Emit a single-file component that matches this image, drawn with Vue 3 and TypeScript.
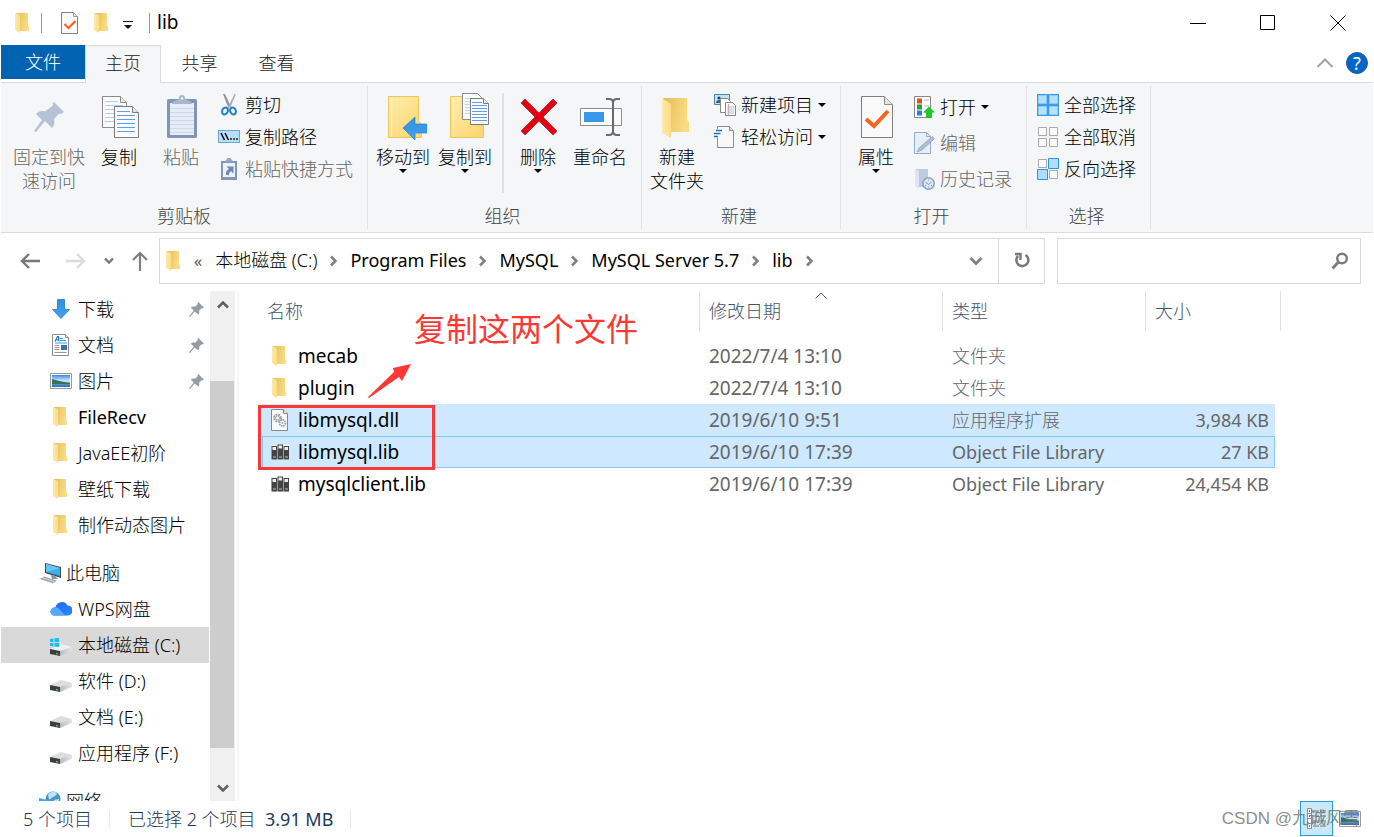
<script setup lang="ts">
import { ref } from 'vue'

interface SmallCommand {
  label: string
  icon: string
  disabled?: boolean
  menu?: boolean
}

interface NavItem {
  label: string
  icon: string
  pinned?: boolean
  root?: boolean
  current?: boolean
}

interface FileEntry {
  name: string
  icon: string
  date: string
  type: string
  size: string
  selected?: boolean
  focused?: boolean
}

const search = ref('')

// Latin strings are set in the regular weight, Chinese strings in the light one.
const isLatin = (text: string): boolean => /^[\x20-\x7e]+$/.test(text)

const tabs: string[] = ['共享', '查看']

const clipboardCommands: SmallCommand[] = [
  { label: '剪切', icon: 'i-cut' },
  { label: '复制路径', icon: 'i-path' },
  { label: '粘贴快捷方式', icon: 'i-shortcut', disabled: true },
]

const newCommands: SmallCommand[] = [
  { label: '新建项目', icon: 'i-newitem', menu: true },
  { label: '轻松访问', icon: 'i-easy', menu: true },
]

const openCommands: SmallCommand[] = [
  { label: '打开', icon: 'i-open', menu: true },
  { label: '编辑', icon: 'i-edit', disabled: true },
  { label: '历史记录', icon: 'i-history', disabled: true },
]

const selectCommands: SmallCommand[] = [
  { label: '全部选择', icon: 'i-selall' },
  { label: '全部取消', icon: 'i-selnone' },
  { label: '反向选择', icon: 'i-selinv' },
]

const crumbs: string[] = ['本地磁盘 (C:)', 'Program Files', 'MySQL', 'MySQL Server 5.7', 'lib']

const navItems: NavItem[] = [
  { label: '下载', icon: 'i-download', pinned: true },
  { label: '文档', icon: 'i-doc', pinned: true },
  { label: '图片', icon: 'i-picture', pinned: true },
  { label: 'FileRecv', icon: 'i-folder' },
  { label: 'JavaEE初阶', icon: 'i-folder' },
  { label: '壁纸下载', icon: 'i-folder' },
  { label: '制作动态图片', icon: 'i-folder' },
  { label: '此电脑', icon: 'i-pc', root: true },
  { label: 'WPS网盘', icon: 'i-cloud' },
  { label: '本地磁盘 (C:)', icon: 'i-windrive', current: true },
  { label: '软件 (D:)', icon: 'i-drive' },
  { label: '文档 (E:)', icon: 'i-drive' },
  { label: '应用程序 (F:)', icon: 'i-drive' },
  { label: '网络', icon: 'i-network', root: true },
]

const files: FileEntry[] = [
  { name: 'mecab', icon: 'i-folder', date: '2022/7/4 13:10', type: '文件夹', size: '' },
  { name: 'plugin', icon: 'i-folder', date: '2022/7/4 13:10', type: '文件夹', size: '' },
  { name: 'libmysql.dll', icon: 'i-dll', date: '2019/6/10 9:51', type: '应用程序扩展', size: '3,984 KB', selected: true },
  { name: 'libmysql.lib', icon: 'i-lib', date: '2019/6/10 17:39', type: 'Object File Library', size: '27 KB', selected: true, focused: true },
  { name: 'mysqlclient.lib', icon: 'i-lib', date: '2019/6/10 17:39', type: 'Object File Library', size: '24,454 KB' },
]
</script>

<template>
  <svg class="sprite" aria-hidden="true">
    <defs>
      <linearGradient id="g-back" x1="0" y1="0" x2="1" y2="0.3">
        <stop offset="0" stop-color="#e3bb58" /><stop offset="1" stop-color="#fbdc83" />
      </linearGradient>
      <linearGradient id="g-flap" x1="0" y1="0" x2="1" y2="0">
        <stop offset="0" stop-color="#ffe9a8" /><stop offset="1" stop-color="#fbdd85" />
      </linearGradient>
      <linearGradient id="g-fold" x1="0" y1="0" x2="1" y2="1">
        <stop offset="0" stop-color="#ffedae" /><stop offset="1" stop-color="#fcd46c" />
      </linearGradient>
      <linearGradient id="g-blue" x1="0" y1="0" x2="0" y2="1">
        <stop offset="0" stop-color="#2f8fe0" /><stop offset="1" stop-color="#41a4f0" />
      </linearGradient>
      <linearGradient id="g-drive" x1="0" y1="0" x2="1" y2="0">
        <stop offset="0" stop-color="#b9bbbd" /><stop offset="1" stop-color="#e4e5e7" />
      </linearGradient>
      <linearGradient id="g-cloud" x1="0" y1="0" x2="1" y2="1">
        <stop offset="0" stop-color="#1d63ee" /><stop offset="1" stop-color="#2e8bfb" />
      </linearGradient>
      <linearGradient id="g-sky" x1="0" y1="0" x2="0" y2="1">
        <stop offset="0" stop-color="#3f86e6" /><stop offset="0.5" stop-color="#d5ecfb" /><stop offset="0.7" stop-color="#5d9fc0" /><stop offset="1" stop-color="#2d6cb4" />
      </linearGradient>
    </defs>

    <symbol id="i-folder" viewBox="0 0 22 22">
      <path d="M4 1h12v13l1 1v4H6z" fill="url(#g-back)" />
      <path d="M3 1l5 2v18l-5-3z" fill="url(#g-flap)" />
    </symbol>
    <symbol id="i-check" viewBox="0 0 22 22">
      <path d="M3.500.5h12l4 4v17h-16z" fill="#fafafa" stroke="#808080" />
      <path d="M15.500.5v4h4" fill="#e4e4e4" stroke="#999" />
      <path d="M6.500 12l4 4 7-7" fill="none" stroke="#f4641e" stroke-width="2.200" />
    </symbol>
    <symbol id="i-cut" viewBox="0 0 22 22">
      <path d="M5 0l2 0 5.500 12-2 2z" fill="#8b9299" /><path d="M16.500 0h1.500l-5.500 13-3 1z" fill="#a9afb5" />
      <ellipse cx="7" cy="17" rx="2.800" ry="3.600" transform="rotate(25 7 17)" fill="none" stroke="#1d82c6" stroke-width="2" />
      <ellipse cx="15" cy="17" rx="2.800" ry="3.600" transform="rotate(-25 15 17)" fill="none" stroke="#1d82c6" stroke-width="2" />
    </symbol>
    <symbol id="i-path" viewBox="0 0 22 22">
      <rect x="0.500" y="4.500" width="21" height="12" fill="#b7defa" stroke="#6ba6cc" />
      <path d="M3 7l3.500 7M7 7l3.500 7" stroke="#111" stroke-width="1.600" />
      <path d="M12 13h2M15 13h2M18 13h2" stroke="#222" stroke-width="1.600" />
    </symbol>
    <symbol id="i-shortcut" viewBox="0 0 22 22">
      <path d="M3 3h16v19H3z" fill="#8396b8" /><path d="M5 5h12v14H5z" fill="#eef3fa" />
      <path d="M7 4c0-2 2-2 2.500-4h3c.5 2 2.500 2 2.500 4z" fill="#93a5c2" />
      <path d="M8.500 8.500h7v7l-2.300-2.300c-2 1-2.400 2.300-2.400 4.300l-3-1c0-3 1.300-4.300 3.200-5.500z" fill="#6f87b5" />
    </symbol>
    <symbol id="i-newitem" viewBox="0 0 22 22">
      <path d="M.5.5h15v10H.5z" fill="#bfe2f7" stroke="#4988ad" /><circle cx="5" cy="4" r="1.600" fill="#23445c" /><path d="M2 9c0-4 6-4 6 0z" fill="#35617e" />
      <path d="M6.500 4.500h7l3 3v11h-10z" fill="#fff" stroke="#888" />
      <path d="M11.500 8.500h7l3 3v10h-10z" fill="#fff" stroke="#888" /><path d="M13 13h7M13 15h7M13 17h7M13 19h7" stroke="#a5c5e8" /><path d="M14.500 10v11" stroke="#e4a3a8" />
    </symbol>
    <symbol id="i-easy" viewBox="0 0 22 22">
      <path d="M3.500.5h12l4 4v17h-16z" fill="#f8f8f8" stroke="#8b8b8b" /><path d="M15.500.5v4h4" fill="#e3e3e3" stroke="#8b8b8b" />
      <path d="M2 4.500h5M0 7.500h6M0 10.500h5" stroke="#f5f6f7" stroke-width="3" />
      <path d="M2 4.500h6M0 7.500h6.500M0 10.500h4" stroke="#1c6fb7" stroke-width="1.500" />
    </symbol>
    <symbol id="i-open" viewBox="0 0 22 22">
      <path d="M1.500.5h16v21h-16z" fill="#fcfcfc" stroke="#888" />
      <path d="M4 2.500h5v5H4z" fill="#e8501a" /><path d="M4 8.500h5v5H4z" fill="#22a52b" /><path d="M4 14.500h5v5H4z" fill="#2384dc" />
      <path d="M11 4h5M11 10h5M11 16h3" stroke="#b7b7b7" />
      <path d="M16 10.500l6 6h-3v6h-6v-6h-3z" fill="#1fc62d" />
    </symbol>
    <symbol id="i-edit" viewBox="0 0 22 22">
      <path d="M1.500.5h12l4 4v17h-16z" fill="#e6eef9" stroke="#93a8ca" /><path d="M13.500.5v4h4" fill="none" stroke="#93a8ca" />
      <path d="M19.500 4.500l2 2L9 18l-5 2 2-4z" fill="#abbdd8" stroke="#8fa3c2" stroke-width=".8" />
    </symbol>
    <symbol id="i-history" viewBox="0 0 22 22">
      <path d="M3 1h12v15l1 3H5z" fill="#bdcbe1" /><path d="M2 1l4 2v18l-4-3z" fill="#dae4f2" />
      <circle cx="15.500" cy="15.500" r="5.700" fill="#dce5f1" stroke="#8da1c2" stroke-width="1.600" />
      <path d="M12.500 14l3 2.500 3-2.500" fill="none" stroke="#8598b8" /><path d="M12 17.500h1M18 17.500h1M15 19h1M15 12h1" stroke="#8598b8" />
    </symbol>
    <symbol id="i-selall" viewBox="0 0 22 22">
      <path d="M0 0h22v22H0z" fill="#3e9be5" />
      <path d="M1.500 1.500h8v8h-8zM12.500 1.500h8v8h-8zM1.500 12.500h8v8h-8zM12.500 12.500h8v8h-8z" fill="#b5e0ff" stroke="#8ccaf9" />
    </symbol>
    <symbol id="i-selnone" viewBox="0 0 22 22">
      <path d="M1.500 1.500h8v8h-8zM12.500 1.500h8v8h-8zM1.500 12.500h8v8h-8zM12.500 12.500h8v8h-8z" fill="#fbfbfb" stroke="#a9a9a9" />
    </symbol>
    <symbol id="i-selinv" viewBox="0 0 22 22">
      <path d="M1.500 1.500h8v8h-8zM12.500 12.500h8v8h-8z" fill="#fbfbfb" stroke="#a9a9a9" />
      <path d="M11.500.5h10v10h-10zM.5 11.500h10v10H.5z" fill="#aeddff" stroke="#2f93e2" />
    </symbol>
    <symbol id="i-download" viewBox="0 0 22 22">
      <path d="M7.500 1.500h7v10h5L11 20.500 2.500 11.500h5z" fill="url(#g-blue)" stroke="#2677c0" stroke-width=".8" />
    </symbol>
    <symbol id="i-doc" viewBox="0 0 22 22">
      <path d="M2.500.5h13l3 3v18h-16z" fill="#fff" stroke="#8c8c8c" /><path d="M15.500.5v3h3" fill="#e8e8e8" stroke="#8c8c8c" />
      <path d="M5 7.500l2.500-5h1l.5 5M6.500 6h2" fill="none" stroke="#2474bc" stroke-width="1.200" /><path d="M10 4.500h3M10 6.500h6M5 9h12" stroke="#3c9ce5" stroke-width="1.200" />
      <path d="M4.500 11.500h5M4.500 13.500h5M4.500 15.500h5M4.500 18.500h12" stroke="#999" /><path d="M11 11h6v5h-6z" fill="#426f9f" />
    </symbol>
    <symbol id="i-picture" viewBox="0 0 22 22">
      <path d="M.5 3.500h21v15H.5z" fill="#fff" stroke="#969ba2" /><path d="M2 5h18v12H2z" fill="url(#g-sky)" />
      <path d="M2 9c5 1 9 3 18 4v1H2z" fill="#33735e" />
    </symbol>
    <symbol id="i-pc" viewBox="0 0 22 22">
      <path d="M6 1l16 4v11L6 11z" fill="#3f4a55" /><path d="M7 2l14 4v8L7 10z" fill="#39aef0" /><path d="M7 2l14 4-14 4z" fill="#6cc4f5" />
      <path d="M12 13l4 1 3 3h-6z" fill="#8a9199" /><path d="M0 17l5-2.500 13 4.500-4 2.500z" fill="#c6cacf" /><path d="M2 16.500l12 4M5 15l12 4" stroke="#8b9299" stroke-width=".8" />
    </symbol>
    <symbol id="i-cloud" viewBox="0 0 22 22">
      <path d="M3.500 17.500a4 4 0 0 1-.5-7.500l2.500-1a6.500 6.500 0 0 1 12-1.500 5 5 0 0 1 .5 10z" fill="url(#g-cloud)" />
      <path d="M4.500 9c6-.5 7 8 12.500 8.500H4c-5-.5-5-7 .5-8.500z" fill="#55aaff" />
    </symbol>
    <symbol id="i-drive" viewBox="0 0 22 22">
      <path d="M0 15l11-5 11 3-10 5z" fill="#dcdddf" /><path d="M0 15l10 2v5L0 20z" fill="#3b3d3e" /><path d="M10 17l12-4v4L10 22z" fill="url(#g-drive)" />
      <path d="M6 19.500l2 .5" stroke="#48c35b" stroke-width="1.400" />
    </symbol>
    <symbol id="i-windrive" viewBox="0 0 22 22">
      <path d="M0 15l11-5 11 3-10 5z" fill="#eeeff0" /><path d="M0 15l10 2v5L0 20z" fill="#3b3d3e" /><path d="M10 17l12-4v4L10 22z" fill="url(#g-drive)" />
      <path d="M6 19.500l2 .5" stroke="#48c35b" stroke-width="1.400" />
      <path d="M0 5l3.500-.5V8H0zM4.500 4.300L9 4v4H4.500zM0 9h3.500v3.500L0 12zM4.500 9H9v4l-4.500-.5z" fill="#13bfef" />
    </symbol>
    <symbol id="i-network" viewBox="0 0 22 22">
      <circle cx="14" cy="9" r="7.500" fill="#4796c8" /><path d="M9 5c2-4 8-4 9-1-2 2-3 3-4 3s-2 3-4 2zM15 10l5-1c0 3-2 5-4 5z" fill="#bfe3ee" />
      <path d="M0 8l12 3v9L0 17z" fill="#36a9ee" />
    </symbol>
    <symbol id="i-dll" viewBox="0 0 22 22">
      <path d="M2.500.5h12l4 4v17h-16z" fill="#fcfcfc" stroke="#888" /><path d="M14.500.5v4h4" fill="#e8e8e8" stroke="#888" />
      <circle cx="8.500" cy="9" r="3.500" fill="none" stroke="#a2a6aa" stroke-width="2" stroke-dasharray="2 .8" /><circle cx="8.500" cy="9" r="2" fill="none" stroke="#9a9ea2" />
      <circle cx="13.500" cy="14" r="3" fill="#fff" stroke="#8fa1b3" stroke-width="1.800" stroke-dasharray="1.600 .7" /><circle cx="13.500" cy="14" r="1" fill="#a2a6aa" />
    </symbol>
    <symbol id="i-lib" viewBox="0 0 22 22">
      <path d="M2 4h18v15H2z" fill="#f1f1f1" /><path d="M2.500 5h5.500v13.500H2.500zM14.500 5H20v13.500h-5.500zM8.500 3.500H14v15H8.500z" fill="#444" />
      <path d="M3.500 6h3.500v3H3.500zM15.500 6H19v3h-3.500zM9.500 4.500H13v3H9.500z" fill="#eee" /><path d="M4 16h3M10 16h3M16 16h3" stroke="#bbb" />
    </symbol>
    <symbol id="i-pin" viewBox="0 0 16 16">
      <path d="M10 0l6 6-1.500 1-1-.3-2.700 2.700c.4 1.800 0 3-1 4L6 10.200 1 16l-1-.5L5 9 2 6c1-1.200 2.700-1.500 4.500-1L9.300 2.400 9 1z" fill="#929ca5" />
    </symbol>

    <symbol id="b-pin" viewBox="0 0 48 48">
      <path d="M29 9l10 10-3 2-2-.5-5 5.500c1 4 0 7-2 9l-7-7L11 39l-2-1 8-11-6-6c2-2.500 6-3.500 9-2.500l8-6-.5-2z" fill="#b5c1d4" />
    </symbol>
    <symbol id="b-copy" viewBox="0 0 48 48">
      <path d="M7.500 3.500h18l6 6v25h-24z" fill="#fbfbfb" stroke="#8c8c8c" /><path d="M25.500 3.500v6h6" fill="#e6e6e6" stroke="#8c8c8c" />
      <path d="M10 8.500h13M10 12.500h18M10 16.500h18M10 20.500h18M10 24.500h18M10 28.500h18" stroke="#aecbf2" />
      <path d="M19.500 13.500h18l6 6v25h-24z" fill="#fbfbfb" stroke="#7c7c7c" /><path d="M37.500 13.500v6h6" fill="#e6e6e6" stroke="#7c7c7c" />
      <path d="M22 18.500h13M22 22.500h18M22 26.500h18M22 30.500h18M22 34.500h18M22 38.500h18" stroke="#5f9cec" />
    </symbol>
    <symbol id="b-paste" viewBox="0 0 48 48">
      <rect x="10" y="6" width="30" height="39" rx="1.500" fill="#8195b8" /><path d="M13 10h24v32H13z" fill="#e7edf7" />
      <path d="M13 15.500h24M13 19.500h24M13 23.500h24M13 27.500h24M13 31.500h24M13 35.500h24M13 39.500h24" stroke="#cdd9eb" />
      <path d="M15 11c0-4 6-3 7-6a3 3 0 0 1 6 0c1 3 7 2 7 6z" fill="#aab7cb" /><circle cx="25" cy="5.500" r="1.200" fill="#eef2f8" />
    </symbol>
    <symbol id="b-move" viewBox="0 0 48 48">
      <path d="M9.500 3.500h30v24l3 4v13h-33z" fill="url(#g-fold)" stroke="#ecc65d" /><path d="M12.500 5v38" stroke="#fff2bf" />
      <path d="M24 35L36 24v7h12v9H36v7z" fill="url(#g-blue)" stroke="#2b82cc" stroke-width=".7" />
    </symbol>
    <symbol id="b-copyto" viewBox="0 0 48 48">
      <path d="M9.500 3.500h27v26h6v15h-33z" fill="url(#g-fold)" stroke="#ecc65d" /><path d="M12.500 5v38" stroke="#fff2bf" />
      <path d="M21.500.5h15l4 4v22h-19z" fill="#fbfbfb" stroke="#8c8c8c" /><path d="M24 5.500h10M24 8.500h10M24 11.500h10M24 14.500h10M24 17.500h10M24 20.500h10" stroke="#bcd3f3" />
      <path d="M29.500 5.500h13l5 5v21h-18z" fill="#fbfbfb" stroke="#7c7c7c" /><path d="M42.500 5.500v5h5" fill="#e6e6e6" stroke="#7c7c7c" />
      <path d="M31 9.500h10M31 12.500h15M31 15.500h15M31 18.500h15M31 21.500h15M31 24.500h15M31 27.500h15" stroke="#5f9cec" />
    </symbol>
    <symbol id="b-delete" viewBox="0 0 48 48">
      <path d="M11 6l14 14L39 6l4 4-14 14 14 14-4 4-14-14-14 14-4-4 14-14L7 10z" fill="#e60012" stroke="#a51620" stroke-width=".7" />
    </symbol>
    <symbol id="b-rename" viewBox="0 0 48 48">
      <path d="M4.500 15.500h41v17h-41z" fill="#fbfbfb" stroke="#8c8c8c" /><path d="M8 19h20v10H8z" fill="#3797e8" />
      <path d="M30 6h3q4 0 4 4v28q0 4-4 4h-3M44 6h-3q-4 0-4 4M44 42h-3q-4 0-4-4" fill="none" stroke="#6a6a6a" stroke-width="2" />
    </symbol>
    <symbol id="b-newfolder" viewBox="0 0 48 48">
      <path d="M10 5h24v22l2 2v10H17z" fill="url(#g-back)" /><path d="M9 5l9 6v34l-9-5z" fill="url(#g-flap)" />
    </symbol>
    <symbol id="b-props" viewBox="0 0 48 48">
      <path d="M9.500 3.500h23l8 8v33h-31z" fill="#fafafa" stroke="#7e7e7e" /><path d="M32.500 3.500v8h8" fill="#e3e3e3" stroke="#8e8e8e" />
      <path d="M14 26l8 7 14-15" fill="none" stroke="#f4641e" stroke-width="4" />
    </symbol>
  </svg>

  <div class="window">
    <header class="titlebar">
      <svg class="ic"><use href="#i-folder" /></svg>
      <span class="bar first"></span>
      <button class="plain" aria-label="属性"><svg class="ic"><use href="#i-check" /></svg></button>
      <button class="plain newf" aria-label="新建文件夹"><svg class="ic"><use href="#i-folder" /></svg></button>
      <button class="plain quick" aria-label="自定义快速访问工具栏">
        <svg width="10" height="10" viewBox="0 0 10 10"><path d="M0 1.500h10" stroke="#111" /><path d="M1 5h8L5 9z" fill="#111" /></svg>
      </button>
      <span class="bar"></span>
      <h1>lib</h1>
      <div class="controls">
        <button class="plain" aria-label="最小化"><svg width="16" height="16"><path d="M0 8.500h16" stroke="#000" /></svg></button>
        <button class="plain" aria-label="最大化"><svg width="16" height="16"><path d="M.5.5h14v14H.5z" fill="none" stroke="#000" /></svg></button>
        <button class="plain" aria-label="关闭"><svg width="16" height="16"><path d="M.5.5l15 15M15.500.5l-15 15" stroke="#000" /></svg></button>
      </div>
    </header>

    <nav class="tabs">
      <button class="tab file">文件</button>
      <button class="tab active">主页</button>
      <button v-for="tab in tabs" :key="tab" class="tab">{{ tab }}</button>
      <div class="tab-tools">
        <button class="plain" aria-label="最小化功能区"><svg width="18" height="12"><path d="M1.500 10L9 2.500l7.500 7.500" fill="none" stroke="#a3a3a3" stroke-width="2" /></svg></button>
        <button class="help" aria-label="帮助">?</button>
      </div>
    </nav>

    <section class="ribbon">
      <div class="group g-clip">
        <div class="body">
          <button class="big pinbig" disabled><svg><use href="#b-pin" /></svg><span>固定到快<br />速访问</span></button>
          <button class="big"><svg><use href="#b-copy" /></svg><span>复制</span></button>
          <button class="big" disabled><svg><use href="#b-paste" /></svg><span>粘贴</span></button>
          <div class="stack">
            <button v-for="c in clipboardCommands" :key="c.label" class="small" :disabled="c.disabled">
              <svg class="ic"><use :href="'#' + c.icon" /></svg><span>{{ c.label }}</span>
            </button>
          </div>
        </div>
        <div class="caption">剪贴板</div>
      </div>
      <div class="group g-org">
        <div class="body">
          <button class="big"><svg><use href="#b-move" /></svg><span>移动到</span><i class="caret"></i></button>
          <button class="big"><svg><use href="#b-copyto" /></svg><span>复制到</span><i class="caret"></i></button>
          <span class="divider"></span>
          <button class="big"><svg><use href="#b-delete" /></svg><span>删除</span><i class="caret"></i></button>
          <button class="big"><svg><use href="#b-rename" /></svg><span>重命名</span></button>
        </div>
        <div class="caption">组织</div>
      </div>
      <div class="group g-new">
        <div class="body">
          <button class="big"><svg><use href="#b-newfolder" /></svg><span>新建<br />文件夹</span></button>
          <div class="stack">
            <button v-for="c in newCommands" :key="c.label" class="small">
              <svg class="ic"><use :href="'#' + c.icon" /></svg><span>{{ c.label }}</span><i v-if="c.menu" class="caret"></i>
            </button>
          </div>
        </div>
        <div class="caption">新建</div>
      </div>
      <div class="group g-open">
        <div class="body">
          <button class="big"><svg><use href="#b-props" /></svg><span>属性</span><i class="caret"></i></button>
          <div class="stack tall">
            <button v-for="c in openCommands" :key="c.label" class="small" :disabled="c.disabled">
              <svg class="ic"><use :href="'#' + c.icon" /></svg><span>{{ c.label }}</span><i v-if="c.menu" class="caret"></i>
            </button>
          </div>
        </div>
        <div class="caption">打开</div>
      </div>
      <div class="group g-sel">
        <div class="body">
          <div class="stack">
            <button v-for="c in selectCommands" :key="c.label" class="small">
              <svg class="ic"><use :href="'#' + c.icon" /></svg><span>{{ c.label }}</span>
            </button>
          </div>
        </div>
        <div class="caption">选择</div>
      </div>
    </section>

    <section class="address-row">
      <div class="history">
        <button class="plain" aria-label="后退"><svg width="20" height="18"><path d="M20 9H2M9 2L2 9l7 7" fill="none" stroke="#777" stroke-width="2.400" /></svg></button>
        <button class="plain" aria-label="前进"><svg width="20" height="18"><path d="M0 9h18M11 2l7 7-7 7" fill="none" stroke="#dcdcdc" stroke-width="2.400" /></svg></button>
        <button class="plain" aria-label="最近浏览的位置"><svg width="10" height="8"><path d="M1 1.500l4 4 4-4" fill="none" stroke="#777" stroke-width="2.400" /></svg></button>
        <button class="plain" aria-label="向上"><svg width="16" height="20"><path d="M8 20V2M1 9l7-7 7 7" fill="none" stroke="#808080" stroke-width="2.200" /></svg></button>
      </div>
      <div class="address">
        <svg class="ic"><use href="#i-folder" /></svg>
        <span class="more">«</span>
        <template v-for="c in crumbs" :key="c">
          <button class="crumb" :class="{ latin: isLatin(c) }">{{ c }}</button>
          <svg class="sep" width="7" height="12"><path d="M1 1.500L5.500 6 1 10.500" fill="none" stroke="#808080" stroke-width="2.600" /></svg>
        </template>
        <button class="plain drop" aria-label="以前的位置"><svg width="14" height="10"><path d="M1.500 2L7 7.500 12.500 2" fill="none" stroke="#808080" stroke-width="2.800" /></svg></button>
        <button class="plain refresh" aria-label="刷新">
          <svg width="16" height="18" viewBox="0 0 16 18"><path d="M11.500 3A6 6 0 1 1 4 4" fill="none" stroke="#7a7a7a" stroke-width="2.600" /><path d="M1 2h5.500v6" fill="none" stroke="#7a7a7a" stroke-width="2.400" /></svg>
        </button>
      </div>
      <label class="search">
        <input v-model="search" type="text" aria-label="搜索 lib" />
        <svg width="18" height="18"><circle cx="11" cy="6.500" r="4.800" fill="none" stroke="#7a7a7a" stroke-width="2.400" /><path d="M8 9.500L1.500 16.500" stroke="#7a7a7a" stroke-width="2.800" /></svg>
      </label>
    </section>

    <main class="main">
      <aside class="sidebar">
        <a v-for="n in navItems" :key="n.label + n.icon" href="#" class="nav" :class="{ root: n.root, current: n.current }">
          <svg class="ic"><use :href="'#' + n.icon" /></svg>
          <span :class="{ latin: isLatin(n.label) }">{{ n.label }}</span>
          <svg v-if="n.pinned" class="pin"><use href="#i-pin" /></svg>
        </a>
      </aside>
      <div class="scrollbar">
        <button class="plain" aria-label="向上滚动"><svg width="12" height="10"><path d="M1 8.500l5-5 5 5" fill="none" stroke="#606060" stroke-width="2.600" /></svg></button>
        <span class="above"></span><span class="thumb"></span><span class="below"></span>
        <button class="plain" aria-label="向下滚动"><svg width="12" height="10"><path d="M1 2.500l5 5 5-5" fill="none" stroke="#606060" stroke-width="2.600" /></svg></button>
      </div>
      <section class="content">
        <table>
          <colgroup><col class="c-name" /><col class="c-date" /><col class="c-type" /><col class="c-size" /><col class="c-end" /></colgroup>
          <thead>
            <tr>
              <th class="h-name">名称</th>
              <th>修改日期<svg class="sort" width="12" height="7"><path d="M.5 6.500L6 1l5.500 5.500" fill="none" stroke="#666" /></svg></th>
              <th>类型</th>
              <th>大小</th>
              <td class="h-end"></td>
            </tr>
          </thead>
          <tbody>
            <tr v-for="f in files" :key="f.name" :class="{ selected: f.selected, focused: f.focused }">
              <td class="name"><div><svg class="ic"><use :href="'#' + f.icon" /></svg><span>{{ f.name }}</span></div></td>
              <td class="date">{{ f.date }}</td>
              <td :class="{ latin: isLatin(f.type) }">{{ f.type }}</td>
              <td class="size latin">{{ f.size }}</td>
            </tr>
          </tbody>
        </table>
        <div class="mark"></div>
        <svg class="arrow" width="44" height="36" viewBox="0 0 44 36"><path d="M43 1L34 18l-3-4L1 35 0 34 26 9l-1-4z" fill="#fb3836" /></svg>
        <p class="note">复制这两个文件</p>
      </section>
    </main>

    <footer class="status">
      <span class="count">5 个项目</span>
      <span class="picked">已选择 2 个项目&nbsp; <span class="latin">3.91 MB</span></span>
      <div class="views">
        <button class="view on" aria-label="详细信息">
          <svg width="22" height="22"><path d="M1.500.5h4v5h-4zM1.500 5.500h4v5h-4zM1.500 10.500h4v5h-4zM1.500 15.500h4v5h-4z" fill="#fff" stroke="#8b8b8b" /><path d="M3 3h1M3 8h1M3 18h1" stroke="#4a7d4a" stroke-width="2" /><path d="M7 3h6M14 3h6M7 8h6M14 8h6M7 13h6M14 13h6M7 18h6M14 18h6" stroke="#777" /></svg>
        </button>
        <button class="view" aria-label="大缩略图"><svg class="ic"><use href="#i-picture" /></svg></button>
      </div>
      <span class="credit">CSDN @九诚风雪</span>
    </footer>
  </div>
</template>

<style>
body {
  margin: 0;
  background: #fff;
}
</style>

<style scoped>
.sprite {
  position: absolute;
  width: 0;
  height: 0;
}
.window {
  display: flex;
  flex-direction: column;
  box-sizing: border-box;
  height: 100vh;
  padding: 0 1px;
  overflow: hidden;
  font: 300 18px/24px "Noto Sans", "Noto Sans CJK SC", sans-serif;
  color: #000;
}
.window * {
  box-sizing: border-box;
}
button {
  margin: 0;
  padding: 0;
  border: 0;
  background: none;
  font: inherit;
  color: inherit;
  white-space: nowrap;
}
.latin {
  font-weight: 400;
}
.plain {
  display: flex;
  align-items: center;
  justify-content: center;
}
.ic {
  width: 22px;
  height: 22px;
  flex: none;
  display: block;
}

.titlebar {
  display: flex;
  align-items: center;
  height: 45px;
  flex: none;
  padding-left: 11px;
}
.bar {
  width: 1px;
  height: 20px;
  background: #999;
}
.bar.first {
  margin: 0 16px 0 7px;
}
.newf {
  margin: 0 10px 0 11px;
}
.quick {
  margin-right: 16px;
  padding-top: 4px;
}
h1 {
  margin: 0 0 0 7px;
  padding-bottom: 2px;
  font-size: 19px;
  font-weight: 400;
}
.controls {
  display: flex;
  margin-left: auto;
}
.controls button {
  width: 70px;
  height: 45px;
}

.tabs {
  display: flex;
  height: 38px;
  flex: none;
  border-bottom: 1px solid #dadbdc;
}
.tab {
  width: 77px;
  height: 36px;
  color: #222;
}
.tab.file {
  width: 84px;
  height: 34px;
  background: #0063b1;
  color: #fff;
}
.tab.active {
  height: 38px;
  width: 76px;
  padding-bottom: 3px;
  border: 1px solid #dadbdc;
  border-bottom: 0;
  background: #f5f6f7;
}
.tab-tools {
  display: flex;
  align-items: center;
  gap: 12px;
  margin-left: auto;
  padding: 0 5px 1px 0;
}
.help {
  width: 22px;
  height: 22px;
  border-radius: 50%;
  background: #0067c6;
  border: 1px solid #1b5da0;
  color: #fff;
  font-size: 18px;
  font-weight: 400;
  line-height: 18px;
}

.ribbon {
  display: flex;
  height: 150px;
  flex: none;
  padding: 3px 0;
  background: #f5f6f7;
  border-bottom: 1px solid #dadbdc;
}
.group {
  display: flex;
  flex-direction: column;
  flex: none;
  border-right: 1px solid #e2e3e4;
}
.g-clip { width: 367px; }
.g-org { width: 274px; }
.g-new { width: 199px; }
.g-open { width: 186px; }
.g-sel { width: 124px; }
.body {
  display: flex;
  flex: 1;
  padding-left: 4px;
}
.g-clip .body { padding-left: 9px; }
.g-sel .body { padding-left: 10px; }
.caption {
  height: 25px;
  padding-right: 4px;
  text-align: center;
  color: #444;
}
.g-clip .caption { padding-right: 0; }
.big {
  display: flex;
  flex-direction: column;
  align-items: center;
  width: 62px;
  padding-top: 7px;
}
.big.pinbig {
  width: 78px;
}
.big svg {
  width: 48px;
  height: 48px;
  margin-bottom: 4px;
  flex: none;
}
button:disabled {
  color: #666;
}
.caret {
  border: 4px solid transparent;
  border-top-color: #000;
  border-bottom: 0;
}
.divider {
  width: 2px;
  height: 100px;
  margin: 7px 3px 0 6px;
  background: #e0e1e3;
}
.stack {
  display: flex;
  flex-direction: column;
  padding: 3px 0 0 6px;
}
.g-sel .stack { padding-left: 0; }
.small {
  display: flex;
  align-items: center;
  gap: 5px;
  height: 32px;
}
.tall .small {
  height: 36px;
}

.address-row {
  display: flex;
  align-items: center;
  height: 58px;
  flex: none;
  padding: 0 12px 2px 0;
}
.history {
  display: flex;
  align-items: center;
  gap: 18px;
  width: 158px;
  padding-left: 19px;
}
.history button:first-child {
  margin-right: 8px;
}
.address {
  display: flex;
  align-items: center;
  flex: 1;
  min-width: 0;
  height: 46px;
  padding-left: 3px;
  border: 1px solid #d9d9d9;
}
.more {
  margin: 0 13px 0 9px;
  font-size: 16px;
  font-weight: 400;
  color: #555;
}
.crumb {
  padding-bottom: 2px;
}
.sep {
  margin: 0 13px;
  flex: none;
}
.drop {
  width: 44px;
  height: 44px;
  margin-left: auto;
}
.refresh {
  width: 46px;
  height: 44px;
  border-left: 1px solid #d9d9d9;
}
.search {
  display: flex;
  align-items: center;
  width: 304px;
  height: 46px;
  margin-left: 12px;
  padding-right: 11px;
  border: 1px solid #d9d9d9;
}
.search input {
  flex: 1;
  min-width: 0;
  border: 0;
  outline: 0;
  font: inherit;
}

.main {
  display: flex;
  flex: 1;
  min-height: 0;
}
.sidebar {
  width: 208px;
  flex: none;
  overflow: hidden;
}
.nav {
  display: flex;
  align-items: center;
  gap: 6px;
  height: 36px;
  padding: 0 5px 0 49px;
  color: #000;
  text-decoration: none;
  white-space: nowrap;
}
.nav.root {
  margin-top: 12px;
  padding-left: 38px;
  gap: 5px;
}
.nav.current {
  background: #d9d9d9;
}
.pin {
  width: 15px;
  height: 15px;
  margin-left: auto;
}
.scrollbar {
  display: flex;
  flex-direction: column;
  width: 25px;
  flex: none;
  margin-left: 1px;
  background: #f0f0f0;
}
.scrollbar button {
  height: 26px;
  flex: none;
}
.above { flex: 14; }
.thumb {
  flex: 80;
  margin-right: 1px;
  background: #cdcdcd;
}
.below { flex: 6; }

.content {
  position: relative;
  flex: 1;
  min-width: 0;
  margin-left: 2px;
  padding-left: 23px;
  border-left: 2px solid #f5f5f5;
}
table {
  width: 1019px;
  table-layout: fixed;
  border-collapse: separate;
  border-spacing: 0;
}
.c-name { width: 437px; }
.c-date { width: 243px; }
.c-type { width: 203px; }
.c-size { width: 130px; }
.c-end { width: 6px; }
th {
  position: relative;
  height: 40px;
  padding: 0 0 0 9px;
  border-left: 1px solid #e2e2e2;
  color: #40546e;
  font-weight: inherit;
  text-align: left;
}
.h-name {
  padding-left: 5px;
  border-left: 0;
}
.h-end {
  padding: 0;
  border-right: 1px solid #e2e2e2;
}
.sort {
  position: absolute;
  top: 1px;
  left: 50%;
  margin-left: -6px;
}
thead::after {
  content: "";
  display: block;
  height: 9px;
}
tbody td {
  height: 32px;
  padding: 0 0 0 10px;
  color: #666;
  white-space: nowrap;
}
tbody td.name {
  padding-left: 7px;
  color: #000;
  font-size: 19px;
  font-weight: 400;
}
tbody td.date {
  font-size: 19px;
  font-weight: 400;
}
.name div {
  display: flex;
  align-items: center;
  gap: 7px;
}
tbody td.size {
  padding-right: 6px;
  text-align: right;
}
.selected td {
  background: #cde8ff;
}
.focused td {
  border: 0 solid #84c8fb;
  border-width: 1px 0;
}
.focused td.name {
  border-left-width: 1px;
  padding-left: 6px;
}
.focused td.size {
  border-right-width: 1px;
  padding-right: 5px;
}
.mark {
  position: absolute;
  left: 19px;
  top: 114px;
  width: 177px;
  height: 65px;
  border: 3px solid #fb3836;
}
.arrow {
  position: absolute;
  left: 129px;
  top: 72px;
}
.note {
  position: absolute;
  left: 175px;
  top: 18px;
  margin: 0;
  color: #fb3836;
  font-size: 32px;
  font-weight: 400;
  line-height: 40px;
  white-space: nowrap;
}

.status {
  position: relative;
  display: flex;
  align-items: center;
  height: 36px;
  flex: none;
  padding: 0 7px 1px 22px;
  color: #1e395b;
}
.status > .count,
.status > .picked {
  padding-right: 17px;
  border-right: 1px solid #e8e8e8;
  line-height: 18px;
  white-space: nowrap;
}
.picked {
  margin-left: 18px;
}
.views {
  display: flex;
  margin-left: auto;
}
.view {
  display: flex;
  align-items: center;
  justify-content: center;
  width: 33px;
  height: 35px;
}
.view.on {
  border: 1px solid #26a0da;
  background: #cbe8f6;
}
.credit {
  position: absolute;
  right: 13px;
  top: 6px;
  color: rgba(110, 110, 110, 0.8);
  font: 17px/24px "Liberation Sans", "Noto Sans CJK SC", sans-serif;
}
</style>
